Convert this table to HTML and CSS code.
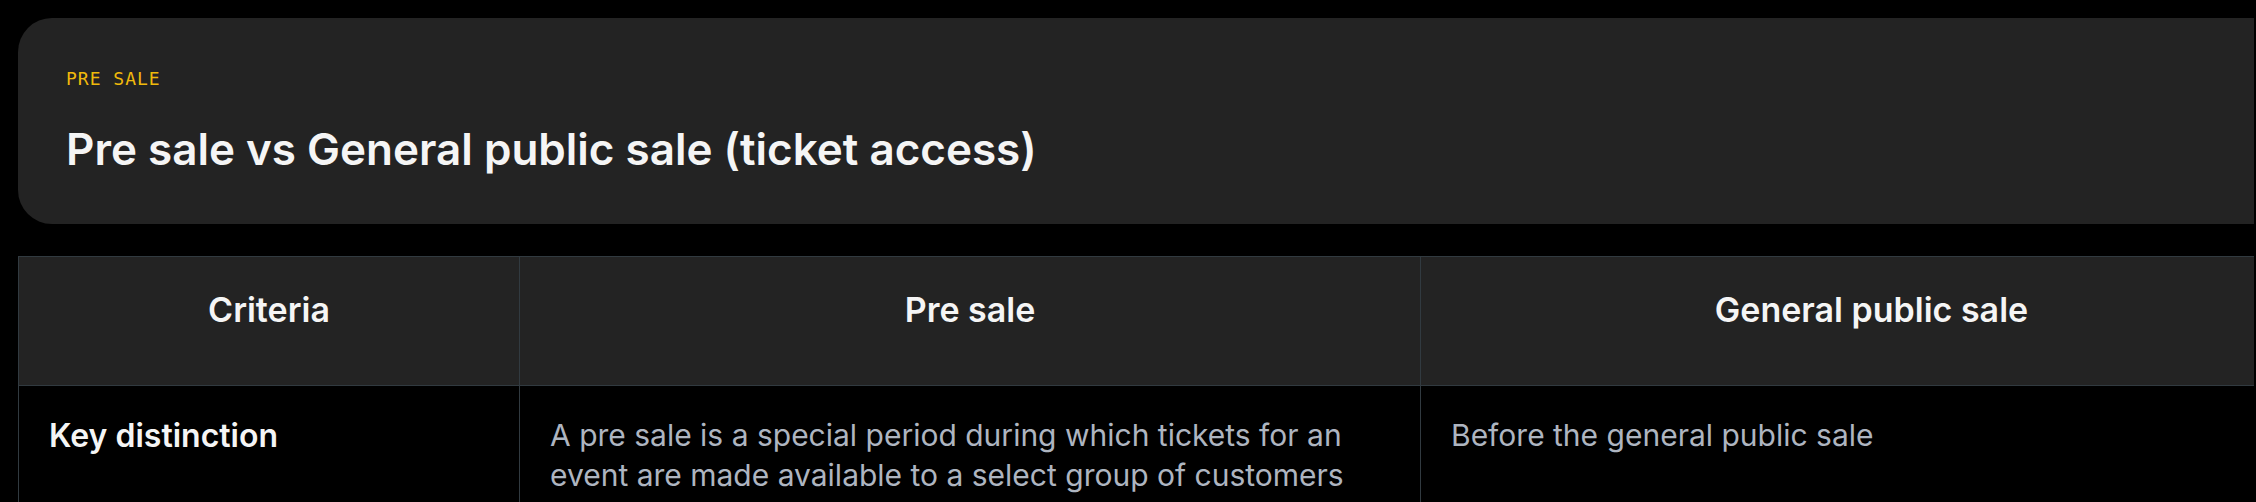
FILE: index.html
```html
<!DOCTYPE html>
<html lang="en">
<head>
<meta charset="utf-8">
<title>Pre sale vs General public sale</title>
<link rel="stylesheet" href="styles.css">
</head>
<body>
<div class="page">
  <!-- intro card -->
  <section class="hero">
    <div class="hero-label">PRE SALE</div>
    <h1 class="hero-title">Pre sale vs General public sale (ticket access)</h1>
  </section>

  <!-- comparison table -->
  <table class="compare">
    <colgroup>
      <col class="col-criteria">
      <col class="col-pre">
      <col class="col-general">
    </colgroup>
    <thead>
      <tr>
        <th>Criteria</th>
        <th>Pre sale</th>
        <th>General public sale</th>
      </tr>
    </thead>
    <tbody>
      <tr>
        <td class="row-name">Key distinction</td>
        <td>A pre sale is a special period during which tickets for an event are made available to a select group of customers before the general public</td>
        <td>Before the general public sale</td>
      </tr>
    </tbody>
  </table>
</div>
</body>
</html>
```

FILE: styles.css
```css
html, body {
  margin: 0;
  background: #000;
}

body {
  font-family: Inter, "Noto Sans", sans-serif;
  color: #f5f5f5;
}

/* the content is wider than the window, it gets cut on the right */
.page {
  overflow: hidden;
  margin-right: 2px;
  padding: 18px 0 0 18px;
}

.hero {
  width: 2304px;
  box-sizing: border-box;
  padding: 49px 48px 47px;
  background: #232323;
  border-radius: 34px;
}

.hero-label {
  font-family: "DejaVu Sans Mono", monospace;
  font-size: 18px;
  line-height: 24px;
  letter-spacing: 1px;
  color: #f0b90b;
}

.hero-title {
  margin: 31px 0 0;
  font-size: 44px;
  line-height: 55px;
  font-weight: 600;
  color: #f5f5f5;
}

.compare {
  width: 2304px;
  margin-top: 32px;
  border-collapse: collapse;
  table-layout: fixed;
  border: 1px solid #313a40;
}

.col-criteria { width: 501px; }
.col-pre { width: 901px; }
.col-general { width: 902px; }

.compare th,
.compare td {
  border: 1px solid #313a40;
}

.compare th {
  padding: 29px 30px 51px;
  background: #232323;
  font-size: 34px;
  line-height: 48px;
  font-weight: 600;
  text-align: center;
  color: #f5f5f5;
}

.compare td {
  padding: 29px 30px;
  vertical-align: top;
  font-size: 30px;
  line-height: 40px;
  color: #aeb5c0;
}

.compare td.row-name {
  padding-top: 30px;
  font-size: 32px;
  font-weight: 600;
  color: #f5f5f5;
}
```
